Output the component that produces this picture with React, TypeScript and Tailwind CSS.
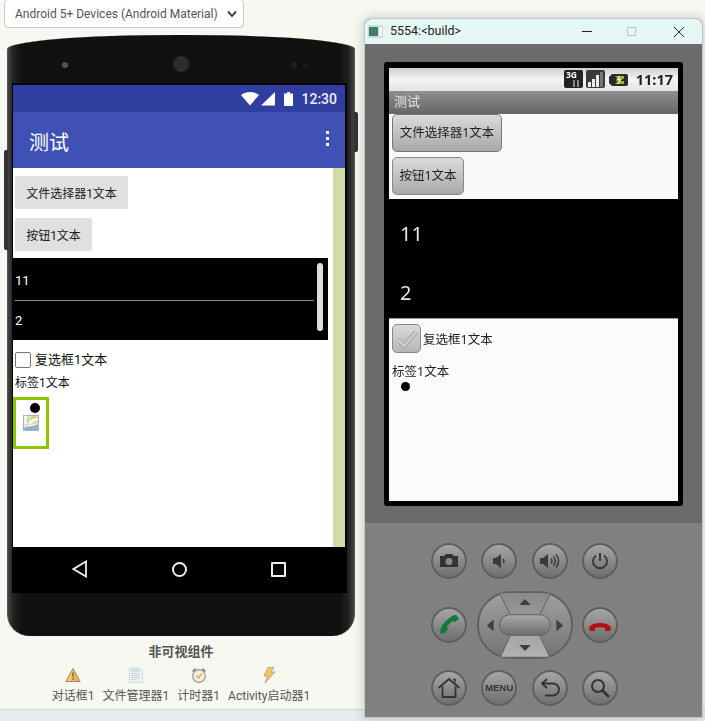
// App.tsx
const SANS = "font-['Roboto','Noto_Sans_CJK_SC',sans-serif]";

function WarnIcon() {
  return (
    <svg width="16" height="16" viewBox="0 0 16 16">
      <path d="M8 1.500 15.200 14.500H.8Z" fill="#f5c870" stroke="#9a8a6a" strokeWidth="1" />
      <path d="M8 3 8 14H14Z" fill="#f0a850" opacity="0.7" />
      <path d="M7.300 5.500h1.400l-.2 5h-1ZM7.300 11.400h1.400v1.400H7.300Z" fill="#6b5a3a" />
    </svg>
  );
}

function DocIcon() {
  return (
    <svg width="16" height="16" viewBox="0 0 16 16">
      <path d="M1.500 1h10l3 3v11.500h-13Z" fill="#eef1f1" stroke="#d4d8d8" />
      <rect x="3" y="2.500" width="9" height="2" fill="#b6dde4" />
      <path d="M3 6.500h9M3 8.500h9M3 10.500h9M3 12.500h6" stroke="#cfd2d2" strokeWidth="1" />
    </svg>
  );
}

function ClockIcon() {
  return (
    <svg width="16" height="16" viewBox="0 0 16 16">
      <path d="M1 4 4 1 5.500 2.500 2.500 5.500ZM15 4 12 1 10.500 2.500 13.500 5.500Z" fill="#8a8a85" />
      <circle cx="8" cy="9" r="6.300" fill="#f2f0e6" stroke="#a5a39a" strokeWidth="1.400" />
      <path d="M5 8.500 7.500 11 11 6.500" fill="none" stroke="#f0b050" strokeWidth="1.600" />
    </svg>
  );
}

function BoltIcon() {
  return (
    <svg width="16" height="16" viewBox="0 0 16 16">
      <path d="M7 0h6L10 5h4L4 16l2.500-7H3Z" fill="#f2c46a" stroke="#a89a70" strokeWidth="0.7" />
    </svg>
  );
}

function ComponentPic() {
  return (
    <svg width="16" height="16" viewBox="0 0 16 16">
      <rect x="0.500" y="0.500" width="15" height="15" fill="#f4f4ee" stroke="#aeb0b4" />
      <path d="M1 13c3-3 6 0 14-4v6H1Z" fill="#8ab0dc" />
      <path d="M1 11c3-4 4-2 6-2 3 0 3-3 8-4v3c-6 3-9 0-14 4Z" fill="#f7d28e" />
      <path d="M5 1.500 4 8c1-1 2-1 2-2l.5-4.500ZM8 1.500 7 6c2-3 4-3 8-3.500v-1Z" fill="#a9cf6a" />
    </svg>
  );
}

function TinyWindowIcon() {
  return (
    <svg width="15" height="13" viewBox="0 0 15 13">
      <rect width="15" height="13" fill="#d4d8da" />
      <rect x="1" y="2" width="9" height="9" fill="#3f7f6c" />
      <rect x="11" y="2" width="3" height="9" fill="#f6f6f6" />
    </svg>
  );
}

function RoundKey({ children }: { children: React.ReactNode }) {
  return (
    <div className="flex h-[36px] w-[36px] items-center justify-center rounded-full border-2 border-[#5f5f5f] bg-gradient-to-b from-[#a6a6a6] to-[#6f6f6f] shadow-[0_0_1px_#a0a0a0]">
      {children}
    </div>
  );
}

function KeyIcon({ children }: { children: React.ReactNode }) {
  return (
    <svg width="24" height="24" viewBox="0 0 24 24" fill="none">
      {children}
    </svg>
  );
}

function Dpad() {
  return (
    <svg width="96" height="68" viewBox="0 0 98 69">
      <defs>
        <linearGradient id="padLight" x1="0" y1="0" x2="0" y2="1">
          <stop offset="0" stopColor="#8a8a8a" />
          <stop offset="1" stopColor="#b2b2b2" />
        </linearGradient>
        <linearGradient id="padDark" x1="0" y1="0" x2="0" y2="1">
          <stop offset="0" stopColor="#a0a0a0" />
          <stop offset="1" stopColor="#747474" />
        </linearGradient>
        <linearGradient id="padBar" x1="0" y1="0" x2="0" y2="1">
          <stop offset="0" stopColor="#a8a8a8" />
          <stop offset="1" stopColor="#6e6e6e" />
        </linearGradient>
      </defs>
      <rect x="1" y="1" width="96" height="67" rx="33" fill="url(#padDark)" stroke="#5f5f5f" strokeWidth="2" />
      <path d="M23 2H75L64 24H34ZM34 45H64L74 67H24Z" fill="url(#padLight)" />
      <path d="M23 2 34 24M75 2 64 24M34 45 24 67M64 45 74 67" stroke="#5f5f5f" strokeWidth="1" />
      <rect x="23" y="24" width="52" height="21" rx="10.500" fill="url(#padBar)" stroke="#5f5f5f" strokeWidth="1" />
      <path d="M49 8 55 14H43ZM49 61 43 55H55ZM10 35 17 29V41ZM88 35 81 29V41Z" fill="#3f3f3f" />
    </svg>
  );
}

function Emulator() {
  return (
    <div className="absolute left-[364px] top-[18px] flex h-[700px] w-[339px] flex-col overflow-hidden rounded-t-[7px] border border-[#c4c8c4] bg-[#6b6b6b] font-['Noto_Sans','Noto_Sans_CJK_SC',sans-serif] shadow-[0_0_12px_rgba(0,0,0,0.22)]">
      <div className="flex h-[25px] shrink-0 items-center bg-[#e4f7f5] pl-[3px]">
        <TinyWindowIcon />
        <span className="ml-[7px] font-['Roboto',sans-serif] text-[12.500px] text-[#222]">5554:&lt;build&gt;</span>
        <div className="ml-auto mr-[18px] flex items-center">
          <span className="h-px w-[10px] bg-[#222]" />
          <span className="ml-[35px] h-[9px] w-[9px] border border-[#bcc6c5]" />
          <svg width="10" height="10" viewBox="0 0 10 10" className="ml-[38px]">
            <path d="M0 0 10 10M10 0 0 10" stroke="#222" strokeWidth="1" />
          </svg>
        </div>
      </div>

      <div className="ml-[19px] mt-[18px] flex h-[444px] w-[299px] shrink-0 flex-col rounded-[3px] bg-black pb-[5px] pl-[5px] pr-[5px] pt-[6px] blur-[0.3px]">
        <div className="flex h-[23px] items-center justify-end bg-gradient-to-b from-[#cfcfcf] via-[#f4f4f4] to-[#e4e4e4] pr-[5px]">
          <svg width="41" height="19" viewBox="0 0 41 19" className="mr-[4px]">
            <rect x="0" y="0" width="19" height="18" rx="2" fill="#222" />
            <text x="2" y="8" fontSize="8.500" fontWeight="700" fill="#fff">3G</text>
            <path d="M10 10v7M14 17v-7" stroke="#aaa" strokeWidth="1.500" />
            <rect x="22" y="0" width="19" height="18" rx="2" fill="#3a3a3a" />
            <path d="M24 12h3v5h-3ZM28 9h3v8h-3ZM32 5h3v12h-3Z" fill="#eee" />
            <path d="M36 2h3v15h-3Z" fill="#777" />
          </svg>
          <svg width="19" height="14" viewBox="0 0 19 14" className="mr-[8px]">
            <path d="M3 1h14a2 2 0 0 1 2 2v8a2 2 0 0 1-2 2H3L0 10V4Z" fill="#2b2b2b" />
            <path d="M6 3h9v3H9ZM6 11h9V8H9Z" fill="#8ec21a" />
            <path d="M11 2 7 7.500h3L8 12l5-6h-3Z" fill="#eee" />
          </svg>
          <span className="text-[14.500px] font-bold leading-none text-[#222]">11:17</span>
        </div>
        <div className="flex h-[23px] items-center bg-gradient-to-b from-[#8f8f8f] to-[#666] pb-[2px] pl-[5px] text-[13px] text-[#e2e2e2]">
          测试
        </div>
        <div className="flex h-[85px] flex-col items-start gap-[5px] bg-[#fafafa] pl-[3px]">
          <div className="flex h-[38px] w-[110px] items-center justify-center rounded-[5px] border border-[#777] bg-gradient-to-b from-[#dcdcdc] to-[#a8a8a8] text-[12.500px] text-[#222]">
            文件选择器1文本
          </div>
          <div className="flex h-[38px] w-[72px] items-center justify-center rounded-[5px] border border-[#888] bg-gradient-to-b from-[#dcdcdc] to-[#a8a8a8] text-[12.500px] text-[#222]">
            按钮1文本
          </div>
        </div>
        <div className="flex h-[119px] flex-col bg-black pl-[11px] text-[20px] leading-none text-[#e8e8e8]">
          <span className="mt-[25px]">11</span>
          <span className="mt-[39px]">2</span>
        </div>
        <div className="flex flex-1 flex-col items-start border-t border-[#999] bg-[#fbfbfb] pl-[3px] text-[12.500px] text-[#222]">
          <div className="mt-[5px] flex items-center gap-[2px]">
            <div className="flex h-[29px] w-[29px] items-center justify-center rounded-[5px] border border-[#888] bg-gradient-to-b from-[#dadada] to-[#b6b6b6]">
              <svg width="24" height="20" viewBox="0 0 24 20">
                <path d="M3 11 9 17 21 3" fill="none" stroke="#a6a6a6" strokeWidth="4.500" />
                <path d="M3 11 9 17 21 3" fill="none" stroke="#cfcfcf" strokeWidth="2.500" />
              </svg>
            </div>
            <span className="pt-[3px]">复选框1文本</span>
          </div>
          <span className="mt-[10px] leading-[18px]">标签1文本</span>
          <span className="ml-[9px] mt-[1px] h-[9px] w-[9px] rounded-full bg-black" />
        </div>
      </div>

      <div className="mt-[17px] flex flex-1 flex-col bg-[#808080] blur-[0.3px]">
        <div className="mt-[20px] flex h-[36px] justify-between pl-[66px] pr-[84px]">
          <RoundKey>
            <KeyIcon>
              <path d="M3 7h4l2-2h6l2 2h4v11H3Z" fill="#333" />
              <circle cx="12" cy="12.500" r="3.500" fill="#8a8a8a" />
            </KeyIcon>
          </RoundKey>
          <RoundKey>
            <KeyIcon>
              <path d="M6 9h3l5-4v14l-5-4H6Z" fill="#3a3a3a" />
              <path d="M16 10a3 3 0 0 1 0 4" stroke="#3a3a3a" strokeWidth="1.500" />
            </KeyIcon>
          </RoundKey>
          <RoundKey>
            <KeyIcon>
              <path d="M2 9h3l5-4v14l-5-4H2Z" fill="#3a3a3a" />
              <path d="M13 9.500a3.500 3.500 0 0 1 0 5M15.500 7.500a6.500 6.500 0 0 1 0 9M18 5.500a9.500 9.500 0 0 1 0 13" stroke="#3a3a3a" strokeWidth="1.500" />
            </KeyIcon>
          </RoundKey>
          <RoundKey>
            <KeyIcon>
              <path d="M12 4v8" stroke="#3a3a3a" strokeWidth="2" />
              <path d="M8 6.500a7 7 0 1 0 8 0" stroke="#3a3a3a" strokeWidth="2" />
            </KeyIcon>
          </RoundKey>
        </div>
        <div className="mt-[11px] flex h-[69px] items-center justify-between pl-[66px] pr-[84px]">
          <RoundKey>
            <KeyIcon>
              <path d="M4 21c-2-3 0-8 4-12s8-7 11-7l3 4-4 3-2-1c-2 1-5 4-6 6l1 2-3 4Z" fill="#0f7a35" />
            </KeyIcon>
          </RoundKey>
          <Dpad />
          <RoundKey>
            <KeyIcon>
              <path d="M1 16c0-4 5-6 11-6s11 2 11 6l-1 2h-5v-3c-3-1-7-1-10 0v3H2Z" fill="#b50f14" />
            </KeyIcon>
          </RoundKey>
        </div>
        <div className="mt-[11px] flex h-[36px] justify-between pl-[66px] pr-[84px]">
          <RoundKey>
            <KeyIcon>
              <path d="M1.500 12 12 3l10.500 9M5.500 10.500V21h13V10.500" stroke="#333" strokeWidth="1.800" />
              <path d="M16 3.500h2v3" stroke="#333" strokeWidth="1.500" />
            </KeyIcon>
          </RoundKey>
          <RoundKey>
            <span className="font-['Liberation_Sans',sans-serif] text-[9.500px] font-bold text-[#333]">MENU</span>
          </RoundKey>
          <RoundKey>
            <KeyIcon>
              <path d="M9 3 4 7.500l5 4.500" stroke="#333" strokeWidth="1.800" />
              <path d="M4.500 7.500H15a5.500 5.500 0 0 1 0 12H7" stroke="#333" strokeWidth="1.800" />
            </KeyIcon>
          </RoundKey>
          <RoundKey>
            <KeyIcon>
              <circle cx="10" cy="10" r="6" stroke="#333" strokeWidth="2" />
              <path d="M14.500 14.500 21 21" stroke="#333" strokeWidth="2.600" />
            </KeyIcon>
          </RoundKey>
        </div>
      </div>
    </div>
  );
}

function PhoneScreen() {
  return (
    <div className={`ml-[4px] mt-[48px] flex h-[510px] w-[335px] flex-col border-y-2 border-r-2 border-l border-black ${SANS}`}>
      <div className="flex h-[27px] items-center justify-end bg-[#303f9f] pr-[8px]">
        <svg width="34" height="14" viewBox="0 0 34 14" className="mr-[9px]">
          <path d="M0 3C5-1 13-1 18 3L9 13.500Z" fill="#fff" />
          <path d="M20 13.500 34 0V13.500Z" fill="#fff" />
        </svg>
        <svg width="9" height="14" viewBox="0 0 9 14" className="mr-[8px]">
          <path d="M3 0h3v1.500h3V14H0V1.500h3Z" fill="#fff" />
        </svg>
        <span className="text-[14px] font-medium leading-none text-[#eee]">12:30</span>
      </div>
      <div className="flex h-[56px] items-center justify-between bg-[#3f51b5] pl-[16px] pr-[16px]">
        <span className="pt-[5px] text-[20px] text-white">测试</span>
        <div className="mb-[3px] flex flex-col gap-[3px]">
          <span className="h-[3px] w-[3px] bg-white" />
          <span className="h-[3px] w-[3px] bg-white" />
          <span className="h-[3px] w-[3px] bg-white" />
        </div>
      </div>
      <div className="flex h-[379px] items-stretch">
        <div className="flex w-[320px] flex-col items-start bg-white text-[12px] text-[#222]">
          <div className="ml-[2px] mt-[8px] flex h-[33px] w-[113px] items-center justify-center rounded-[2px] bg-[#e0e0e0] pt-[2px]">
            文件选择器1文本
          </div>
          <div className="ml-[2px] mt-[9px] flex h-[33px] w-[77px] items-center justify-center rounded-[2px] bg-[#e0e0e0] pt-[2px]">
            按钮1文本
          </div>
          <div className="relative mt-[7px] flex h-[82px] w-[315px] flex-col bg-black pl-[2px] text-[13px] text-white">
            <span className="flex h-[42px] items-center pt-[3px]">11</span>
            <span className="h-px w-[299px] bg-[#8c8c8c]" />
            <span className="flex h-[39px] items-center">2</span>
            <span className="absolute right-[5px] top-[5px] h-[68px] w-[6px] rounded-full bg-[#dedede]" />
          </div>
          <div className="ml-[2px] mt-[10px] flex items-center gap-[4px] text-[13px] text-[#111]">
            <span className="h-[16px] w-[16px] rounded-[2px] border border-[#777]" />
            <span>复选框1文本</span>
          </div>
          <span className="ml-[2px] mt-[4px] leading-[18px] text-[#111]">标签1文本</span>
          <div className="mt-[5px] flex h-[52px] w-[36px] flex-col items-center border-[3px] border-[#8fc400]">
            <span className="ml-[8px] mt-[3px] h-[10px] w-[10px] rounded-full bg-black" />
            <span className="mt-[2px] flex">
              <ComponentPic />
            </span>
          </div>
        </div>
        <div className="w-[12px] bg-[#d0dca2]" />
      </div>
      <div className="flex h-[46px] flex-1 items-center gap-[84px] bg-black pl-[59px]">
        <svg width="16" height="18" viewBox="0 0 16 18">
          <path d="M14 1.500V16.500L1.500 9Z" fill="none" stroke="#eee" strokeWidth="1.800" />
        </svg>
        <span className="h-[15px] w-[15px] rounded-full border-2 border-[#eee]" />
        <span className="h-[15px] w-[15px] rounded-[1px] border-2 border-[#eee]" />
      </div>
    </div>
  );
}

function TrayItem({ icon, label }: { icon: React.ReactNode; label: string }) {
  return (
    <div className="flex flex-col items-center gap-[4px]">
      {icon}
      <span className="text-[12px] leading-[18px] text-[#555]">{label}</span>
    </div>
  );
}

export default function App() {
  return (
    <div className={`relative h-[721px] w-[705px] overflow-hidden bg-[#e9ecee] ${SANS}`}>
      <div className="flex h-[710px] w-full flex-col items-start border-b border-[#d8d8d4] bg-[#f8f8f3]">
        <div className="-mt-px ml-[4px] flex h-[29px] w-[240px] items-center justify-between rounded-[4px] border border-[#ccc] bg-white pl-[10px] pr-[6px] text-[12px] text-[#555]">
          <span>Android 5+ Devices (Android Material)</span>
          <svg width="10" height="8" viewBox="0 0 10 8">
            <path d="M1 1.500 5 6 9 1.500" fill="none" stroke="#444" strokeWidth="2" />
          </svg>
        </div>

        <div className="relative ml-[7px] mt-[7px] h-[601px] w-[348px] rounded-t-[170px_14px] rounded-b-[22px] border-x border-[#555] bg-[linear-gradient(90deg,#444,#222_1.500%,#111_4%,#111_96%,#222_98.500%,#444)]">
          <span className="absolute -left-[4px] top-[115px] h-[100px] w-[4px] rounded-l-[2px] bg-[#333]" />
          <span className="absolute -right-[4px] top-[77px] h-[40px] w-[4px] rounded-r-[2px] bg-[#333]" />
          <span className="absolute left-[54px] top-[27px] h-[6px] w-[6px] rounded-full bg-[#555]" />
          <span className="absolute left-[165px] top-[21px] h-[16px] w-[16px] rounded-full bg-[#2c2c2c]" />
          <span className="absolute left-[283px] top-[27px] h-[6px] w-[6px] rounded-full bg-[#1f1f1f]" />
          <span className="absolute left-[295px] top-[28px] h-[4px] w-[4px] rounded-full bg-[#1f1f1f]" />
          <PhoneScreen />
        </div>

        <div className="mt-[7px] flex w-[362px] flex-col items-center">
          <span className="text-[13px] font-bold leading-[18px] text-[#555]">非可视组件</span>
          <div className="mt-[6px] flex gap-[8px]">
            <TrayItem icon={<WarnIcon />} label="对话框1" />
            <TrayItem icon={<DocIcon />} label="文件管理器1" />
            <TrayItem icon={<ClockIcon />} label="计时器1" />
            <TrayItem icon={<BoltIcon />} label="Activity启动器1" />
          </div>
        </div>
      </div>
      <Emulator />
    </div>
  );
}
